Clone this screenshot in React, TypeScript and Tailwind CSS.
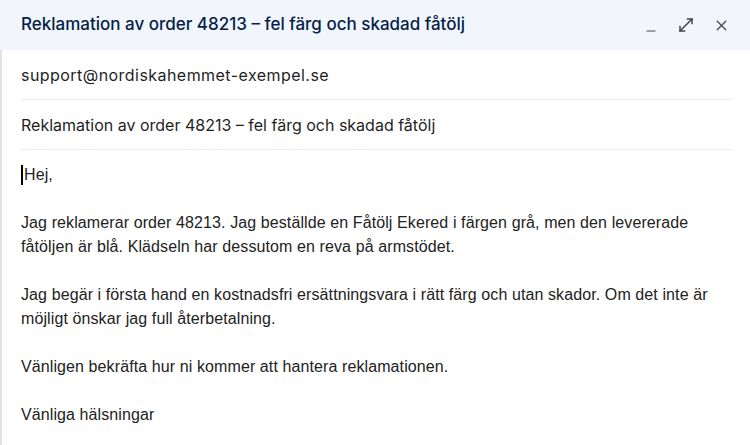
import { Minus, X } from "lucide-react";

const paragraphs = [
  [
    "Jag reklamerar order 48213. Jag beställde en Fåtölj Ekered i färgen grå, men den levererade",
    "fåtöljen är blå. Klädseln har dessutom en reva på armstödet.",
  ],
  [
    "Jag begär i första hand en kostnadsfri ersättningsvara i rätt färg och utan skador. Om det inte är",
    "möjligt önskar jag full återbetalning.",
  ],
  ["Vänligen bekräfta hur ni kommer att hantera reklamationen."],
  ["Vänliga hälsningar"],
];

const ExpandIcon = () => (
  <svg width="18" height="18" viewBox="0 0 24 24" fill="none" stroke="currentColor" strokeWidth="2" strokeLinecap="square">
    <path d="M14 4h6v6" />
    <path d="M10 20H4v-6" />
    <path d="M20 4L4 20" />
  </svg>
);

export default function App() {
  return (
    <div className="flex h-[445px] w-[750px] flex-col overflow-hidden bg-white">
      {/* Header */}
      <div className="flex h-[50px] shrink-0 items-center justify-between bg-[#f2f6fc] pl-[21px] pr-[19px]">
        <span className="font-['Inter',sans-serif] text-[17px] font-medium text-[#041e49]">
          Reklamation av order 48213 – fel färg och skadad fåtölj
        </span>
        <div className="flex items-center gap-[15px] text-[#444746]">
          <button className="flex h-[20px] w-[20px] items-end justify-center pb-[1px]">
            <Minus size={14} strokeWidth={2} className="translate-y-[4px]" />
          </button>
          <button className="flex h-[20px] w-[20px] items-center justify-center">
            <ExpandIcon />
          </button>
          <button className="flex h-[20px] w-[20px] items-center justify-center">
            <X size={17} strokeWidth={1.8} />
          </button>
        </div>
      </div>

      <div className="flex flex-1 flex-col border-l-2 border-[#e3e3e3]">
        <div className="mx-[19px] mr-[18px] flex h-[50px] shrink-0 items-center border-b border-[#ececec] font-['Inter',sans-serif] text-[16px] tracking-[0.45px] text-[#1f1f1f]">
          support@nordiskahemmet-exempel.se
        </div>
        <div className="mx-[19px] mr-[18px] flex h-[50px] shrink-0 items-center border-b border-[#ececec] font-['Inter',sans-serif] text-[16px] text-[#1f1f1f]">
          Reklamation av order 48213 – fel färg och skadad fåtölj
        </div>

        <div className="flex flex-col gap-[24px] px-[19px] pt-[13px] font-['Liberation_Sans',Arial,sans-serif] text-[16px] leading-[24px] tracking-[0.1px] text-[#222222]">
          <p className="flex items-center">
            <span className="mr-[1px] inline-block h-[20px] w-[2px] bg-black" />
            Hej,
          </p>
          {paragraphs.map((lines, i) => (
            <p key={i}>
              {lines.map((l, j) => (
                <span key={j} className="block whitespace-nowrap">
                  {l}
                </span>
              ))}
            </p>
          ))}
        </div>
      </div>
    </div>
  );
}
